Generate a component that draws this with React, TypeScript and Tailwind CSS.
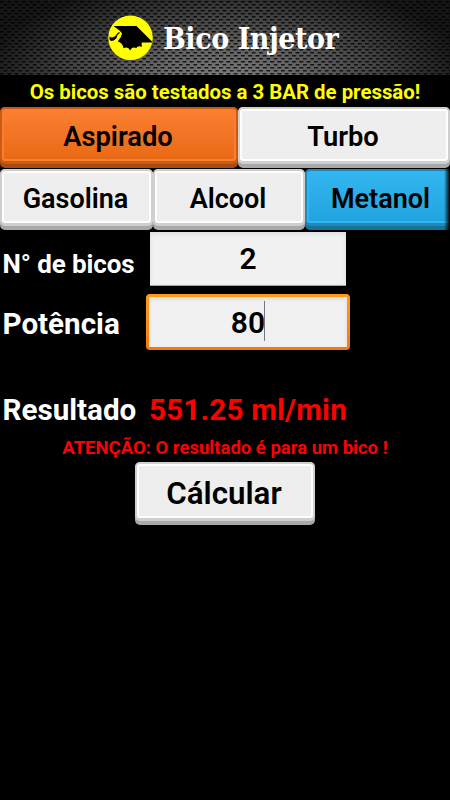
import { useState } from "react";
import clsx from "clsx";

type Tone = "light" | "orange" | "blue";

const shell: Record<Tone, string> = {
  light: "bg-[#a9a9a9]",
  orange: "bg-[#a84b10]",
  blue: "bg-[#17729a]",
};

const edge: Record<Tone, string> = {
  light: "bg-[#cfcfcf]",
  orange: "bg-[#cb5a13]",
  blue: "bg-[#2089b8]",
};

const face: Record<Tone, string> = {
  light: "border-white bg-[#eeeeee]",
  orange: "border-[#fb7f31] bg-linear-to-b from-[#fb7f31] to-[#e96a15]",
  blue: "border-[#33b5f0] bg-linear-to-b from-[#33b5f0] to-[#20a4df]",
};

interface KeyButtonProps {
  label: string;
  tone?: Tone;
  className?: string;
  textClass?: string;
  onClick?: () => void;
}

// Botón con relieve: base oscura, canto y cara superior
const KeyButton = ({ label, tone = "light", className, textClass, onClick }: KeyButtonProps) => (
  <button type="button" onClick={onClick} className={clsx("rounded-[5px] pb-1", shell[tone], className)}>
    <span className={clsx("block h-full rounded-[5px] px-0.5 pt-[1.5px] pb-[3px]", edge[tone])}>
      <span
        className={clsx(
          "flex h-full items-center justify-center rounded-[3px] border-2 pt-1.5 pr-0.5 leading-none font-semibold text-black",
          face[tone],
          textClass
        )}
      >
        {label}
      </span>
    </span>
  </button>
);

const CapLogo = () => (
  <svg width="46" height="46" viewBox="0 0 46 46">
    <circle cx="22.500" cy="22.800" r="22.300" fill="#ffff00" />
    <path
      d="M5.500 11H28.500L44 26.500V27.500H33.700V32Q30 30 28.300 33Q24 31 22.300 35.500Q20 31 15.500 33.300Q15 28 9.800 26.500Q13.500 22 14 18.500L11.500 15.500Z"
      fill="#000"
    />
    <path d="M13 17.500Q8.500 23 7.500 26" stroke="#ffff00" strokeWidth="2" fill="none" />
    <path d="M11.500 17.500Q8.500 19 7.500 23.500" stroke="#000" strokeWidth="1.300" fill="none" />
    <path d="M1.500 21.500Q4 24 8 20.500V23.500Q6 26 3 26L1.500 24.500Z" fill="#000" />
  </svg>
);

const MeshBackground = () => (
  <svg className="absolute inset-0" width="450" height="75">
    <defs>
      <pattern id="mesh" width="7.300" height="6" patternUnits="userSpaceOnUse">
        <rect x="0" y="1" width="4" height="1.500" fill="#000" fillOpacity="0.8" />
        <rect x="3.650" y="4" width="3.650" height="1.500" fill="#000" fillOpacity="0.8" />
      </pattern>
      <radialGradient id="glow" gradientUnits="userSpaceOnUse" cx="0" cy="0" r="1" gradientTransform="translate(225 90) scale(250 115)">
        <stop offset="0" stopColor="#868686" />
        <stop offset="0.350" stopColor="#646464" />
        <stop offset="0.700" stopColor="#3c3c3c" />
        <stop offset="1" stopColor="#161616" />
      </radialGradient>
    </defs>
    <rect width="450" height="75" fill="url(#glow)" />
    <rect width="450" height="75" fill="url(#mesh)" />
  </svg>
);

const App = () => {
  const [engine, setEngine] = useState("Aspirado");
  const [fuel, setFuel] = useState("Metanol");
  const [nozzles, setNozzles] = useState("2");
  const [power, setPower] = useState("80");

  return (
    <div className="h-[800px] w-[450px] overflow-hidden bg-black font-[Roboto,sans-serif]">
      <header className="relative h-[75px]">
        <MeshBackground />
        <div className="relative flex h-full items-center gap-[9px] pl-[108px]">
          <CapLogo />
          <h1 className="pt-0.5 font-['DejaVu_Serif_Condensed','DejaVu_Serif',serif] text-[30px] leading-none font-bold tracking-[-0.45px] whitespace-nowrap text-white">
            Bico Injetor
          </h1>
        </div>
      </header>

      <p className="flex h-8 items-center justify-center pt-[3px] text-[20.4px] leading-none font-bold whitespace-nowrap text-[#ffff00]">
        Os bicos são testados a 3 BAR de pressão!
      </p>

      <div className="flex h-[62px] pb-px">
        <KeyButton
          label="Aspirado"
          tone={engine === "Aspirado" ? "orange" : "light"}
          className="w-[238px]"
          textClass="text-[27.3px]"
          onClick={() => setEngine("Aspirado")}
        />
        <KeyButton
          label="Turbo"
          tone={engine === "Turbo" ? "orange" : "light"}
          className="w-[212px]"
          textClass="text-[27.3px]"
          onClick={() => setEngine("Turbo")}
        />
      </div>

      <div className="relative flex h-[61px]">
        <KeyButton label="Gasolina" tone={fuel === "Gasolina" ? "blue" : "light"} className="w-[153px] shrink-0" textClass="text-[27px]" onClick={() => setFuel("Gasolina")} />
        <KeyButton label="Alcool" tone={fuel === "Alcool" ? "blue" : "light"} className="w-[152px] shrink-0" textClass="text-[27px]" onClick={() => setFuel("Alcool")} />
        <KeyButton label="Metanol" tone={fuel === "Metanol" ? "blue" : "light"} className="w-[153px] shrink-0" textClass="text-[27px]" onClick={() => setFuel("Metanol")} />
        <div className="pointer-events-none absolute top-0 right-0 h-full w-1.5 bg-linear-to-r from-transparent to-black"></div>
      </div>

      <div className="mt-0.5 flex h-[54px] items-center">
        <label className="w-[150px] pt-[9px] pl-[2.5px] text-[26px] leading-none font-bold tracking-[-0.1px] whitespace-nowrap text-white">N° de bicos</label>
        <input
          value={nozzles}
          onChange={(e) => setNozzles(e.target.value)}
          className="h-[54px] w-[196px] border-b border-[#a0a0a0] bg-[#f1f1f1] text-center text-[30px] font-semibold text-black shadow-[inset_0_2px_4px_#dcdcdc] outline-none"
        />
      </div>

      <div className="mt-2 flex h-14 items-center">
        <label className="w-[146px] pt-1.5 pl-[2.5px] text-[29.6px] leading-none font-bold text-white">Potência</label>
        <div className="relative h-14 w-[204px] rounded-[4px] bg-linear-to-b from-[#ff9a1c] to-[#f57a08] p-[3px]">
          <input
            value={power}
            onChange={(e) => setPower(e.target.value)}
            className="h-full w-full bg-[#f1f1f1] text-center text-[30px] font-semibold text-black shadow-[inset_0_2px_4px_#dcdcdc] outline-none"
          />
          <span className="absolute top-[7px] left-[118px] h-10 w-px bg-[#777]"></span>
        </div>
      </div>

      <div className="mt-[43px] flex h-9 items-center text-[29.6px] leading-none font-bold whitespace-nowrap">
        <span className="w-[149px] pl-[2.5px] text-white">Resultado</span>
        <span className="tracking-[0.2px] text-[#ff0000]">551.25 ml/min</span>
      </div>

      <p className="flex h-[33px] items-center justify-center pt-[5px] text-[18.5px] leading-none font-bold whitespace-nowrap text-[#ff0000]">
        ATENÇÃO: O resultado é para um bico !
      </p>

      <div className="flex justify-center">
        <KeyButton label="Cálcular" className="h-[63px] w-[180px]" textClass="text-[31.3px]" />
      </div>
    </div>
  );
};

export default App;
